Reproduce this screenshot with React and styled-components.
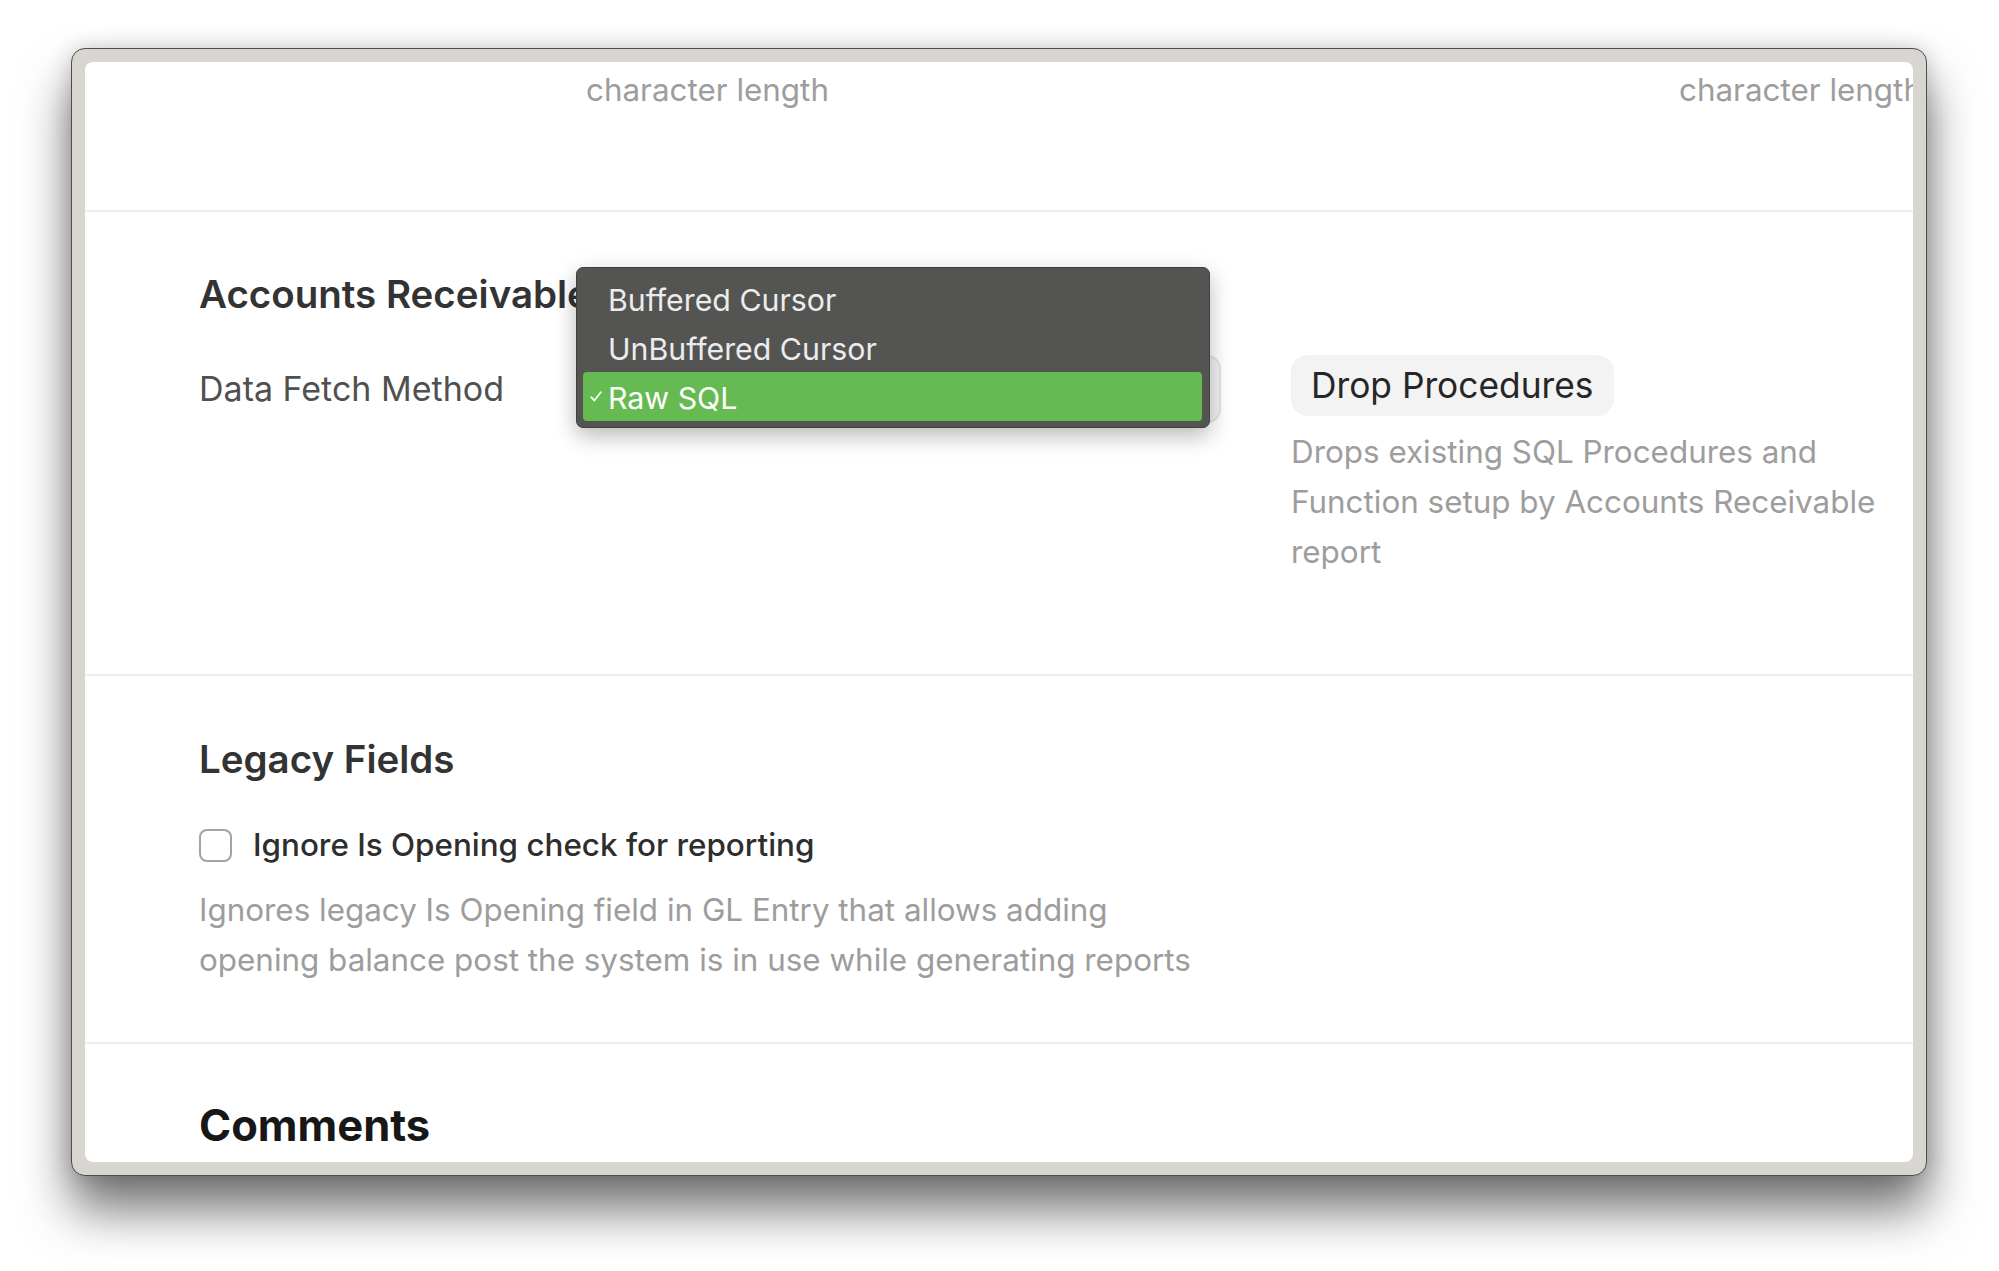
import React from "react";
import styled, { createGlobalStyle } from "styled-components";

const GlobalStyle = createGlobalStyle`
  body {
    margin: 0;
    background: #ffffff;
    font-family: Inter, "Noto Sans", "Liberation Sans", sans-serif;
  }
`;

const Page = styled.div`
  box-sizing: border-box;
  min-height: 1271px;
  padding: 48px 0 0 71px;
  background: #ffffff;
`;

const Frame = styled.div`
  box-sizing: border-box;
  width: 1856px;
  height: 1128px;
  padding: 13px;
  border: 1px solid #4d4d4d;
  border-radius: 14px;
  background: #d9d5d0;
  box-shadow: 0 34px 50px rgba(0, 0, 0, 0.55), 0 0 22px rgba(0, 0, 0, 0.18);
`;

const Screen = styled.div`
  height: 100%;
  background: #ffffff;
  border-radius: 8px;
  overflow: hidden;
`;

const Section = styled.div`
  padding: ${(p) => p.$top}px 0 ${(p) => p.$bottom}px 114px;
  border-bottom: ${(p) => (p.$last ? "none" : "2px solid #ededed")};
`;

const TopRow = styled.div`
  display: grid;
  grid-template-columns: 1093px auto;
  height: 145px;
  padding: 3px 0 0 501px;
  border-bottom: 2px solid #ededed;
`;

const Heading = styled.div`
  font-size: 38.5px;
  line-height: 44px;
  font-weight: 600;
  color: #333333;
  margin-bottom: ${(p) => p.$gap || 0}px;
`;

const Comments = styled.div`
  font-size: 43.5px;
  line-height: 50px;
  font-weight: 700;
  color: #171717;
  padding-bottom: 20px;
`;

const Description = styled.div`
  font-size: 31.4px;
  line-height: 50px;
  color: #9d9d9d;
  max-width: ${(p) => p.$width || 1010}px;
  white-space: ${(p) => (p.$nowrap ? "nowrap" : "normal")};
`;

const FieldRow = styled.div`
  display: flex;
  align-items: flex-start;
`;

const Label = styled.div`
  width: 381px;
  flex-shrink: 0;
  font-size: 34px;
  line-height: 68px;
  color: #505050;
`;

const SelectBox = styled.div`
  position: relative;
  width: 641px;
  height: 68px;
  flex-shrink: 0;
  margin-right: 70px;
  border-radius: 14px;
  background: #f2f2f2;
  box-shadow: inset 0 0 0 2px #e4e4e4;
`;

const Popup = styled.div`
  position: absolute;
  left: -4px;
  top: -88px;
  width: 634px;
  box-sizing: border-box;
  padding: 6px 7px 6px 6px;
  border-radius: 7px;
  background: #545452;
  border: 1px solid #3f3f3e;
  box-shadow: 0 8px 22px rgba(0, 0, 0, 0.28);
`;

const Option = styled.div`
  position: relative;
  display: flex;
  align-items: center;
  box-sizing: border-box;
  height: 49px;
  padding: 2px 0 0 25px;
  border-radius: 4px;
  font-size: 30.3px;
  color: ${(p) => (p.$active ? "#ffffff" : "#ececec")};
  background: ${(p) => (p.$active ? "#66ba52" : "transparent")};
`;

const Check = styled.svg`
  position: absolute;
  left: 7px;
  top: 19px;
`;

const ActionColumn = styled.div`
  display: flex;
  flex-direction: column;
  align-items: flex-start;
  width: 620px;
`;

const Button = styled.div`
  height: 61px;
  display: flex;
  align-items: center;
  padding: 0 21px 0 20px;
  border-radius: 17px;
  background: #f3f3f3;
  font-size: 35.3px;
  color: #262626;
  margin-bottom: 11px;
`;

const CheckRow = styled.div`
  display: flex;
  align-items: center;
  height: 40px;
  gap: 21px;
  margin-bottom: 20px;
`;

const CheckBox = styled.div`
  width: 33px;
  height: 33px;
  box-sizing: border-box;
  border: 2px solid #a3a3a3;
  border-radius: 8px;
  background: #ffffff;
`;

const CheckLabel = styled.div`
  font-size: 31.4px;
  line-height: 40px;
  font-weight: 500;
  color: #2e2e2e;
`;

const options = ["Buffered Cursor", "UnBuffered Cursor", "Raw SQL"];

export default function App() {
  return (
    <Page>
      <GlobalStyle />
      <Frame>
        <Screen>
          <TopRow>
            <Description $nowrap>character length</Description>
            <Description $nowrap>character length</Description>
          </TopRow>

          <Section $top={60} $bottom={97}>
            <Heading $gap={39}>Accounts Receivable</Heading>
            <FieldRow>
              <Label>Data Fetch Method</Label>
              <SelectBox>
                <Popup>
                  {options.map((o) => (
                    <Option key={o} $active={o === "Raw SQL"}>
                      {o === "Raw SQL" && (
                        <Check width="12" height="11" viewBox="0 0 12 11">
                          <path
                            d="M1.2 6.2 L4.4 9.6 L10.8 1.2"
                            fill="none"
                            stroke="#ffffff"
                            strokeWidth="1.7"
                            strokeLinecap="round"
                            strokeLinejoin="round"
                          />
                        </Check>
                      )}
                      {o}
                    </Option>
                  ))}
                </Popup>
              </SelectBox>
              <ActionColumn>
                <Button>Drop Procedures</Button>
                <Description $width={620}>
                  Drops existing SQL Procedures and Function setup by Accounts
                  Receivable report
                </Description>
              </ActionColumn>
            </FieldRow>
          </Section>

          <Section $top={61} $bottom={57}>
            <Heading $gap={44}>Legacy Fields</Heading>
            <CheckRow>
              <CheckBox />
              <CheckLabel>Ignore Is Opening check for reporting</CheckLabel>
            </CheckRow>
            <Description>
              Ignores legacy Is Opening field in GL Entry that allows adding
              opening balance post the system is in use while generating reports
            </Description>
          </Section>

          <Section $top={56} $bottom={0} $last>
            <Comments>Comments</Comments>
          </Section>
        </Screen>
      </Frame>
    </Page>
  );
}
